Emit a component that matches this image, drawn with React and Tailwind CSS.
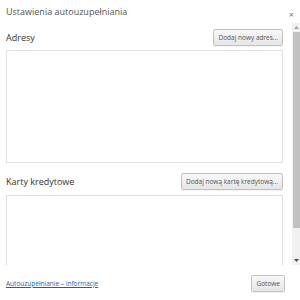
const btn =
  "h-[17px] px-[4px] flex items-center rounded-[2px] border border-[#c3c3c3] bg-gradient-to-b from-[#f8f8f8] to-[#e6e6e6] text-[6.5px] text-[#555] shadow-[0_1px_0_rgba(0,0,0,0.05)]";

function Scrollbar() {
  return (
    <div className="w-[8px] bg-[#f1f1f1] flex flex-col items-center">
      <div className="h-[9px] flex items-center justify-center">
        <svg width="5" height="3" viewBox="0 0 5 3">
          <path d="M0 3 L2.5 0 L5 3 Z" fill="#a3a3a3" />
        </svg>
      </div>
      <div className="w-[7px] h-[196px] bg-[#c1c1c1]" />
      <div className="flex-1" />
      <div className="h-[9px] flex items-center justify-center">
        <svg width="5" height="3" viewBox="0 0 5 3">
          <path d="M0 0 L2.5 3 L5 0 Z" fill="#505050" />
        </svg>
      </div>
    </div>
  );
}

export default function App() {
  return (
    <div className="w-[300px] h-[300px] bg-white flex flex-col font-['Open_Sans',sans-serif] text-[#333]">
      <div className="h-[23px] flex items-start justify-between pl-[6px] pr-[6px]">
        <span className="pt-[5px] text-[9px] text-[#555]">Ustawienia autouzupełniania</span>
        <span className="pt-[10px] text-[9px] leading-none text-[#777]">×</span>
      </div>

      <div className="h-[242px] flex">
        <div className="flex-1 pl-[6px] pr-[9px] overflow-hidden">
          <div className="mt-[6px] flex items-center justify-between">
            <span className="text-[9px] text-[#333]">Adresy</span>
            <button className={btn}>Dodaj nowy adres...</button>
          </div>
          <div className="mt-[4px] h-[113px] border border-[#e0e0e0]" />

          <div className="mt-[10px] flex items-center justify-between">
            <span className="text-[9px] text-[#333]">Karty kredytowe</span>
            <button className={btn}>Dodaj nową kartę kredytową...</button>
          </div>
          <div className="mt-[5px] h-[113px] border border-[#e0e0e0]" />
        </div>
        <Scrollbar />
      </div>

      <div className="flex-1 flex items-center justify-between pl-[6px] pr-[15px] pt-[2px]">
        <a className="text-[6.5px] text-[#1a5fb4] underline">Autouzupełnianie – informacje</a>
        <button className={btn + " h-[16px]"}>Gotowe</button>
      </div>
    </div>
  );
}
